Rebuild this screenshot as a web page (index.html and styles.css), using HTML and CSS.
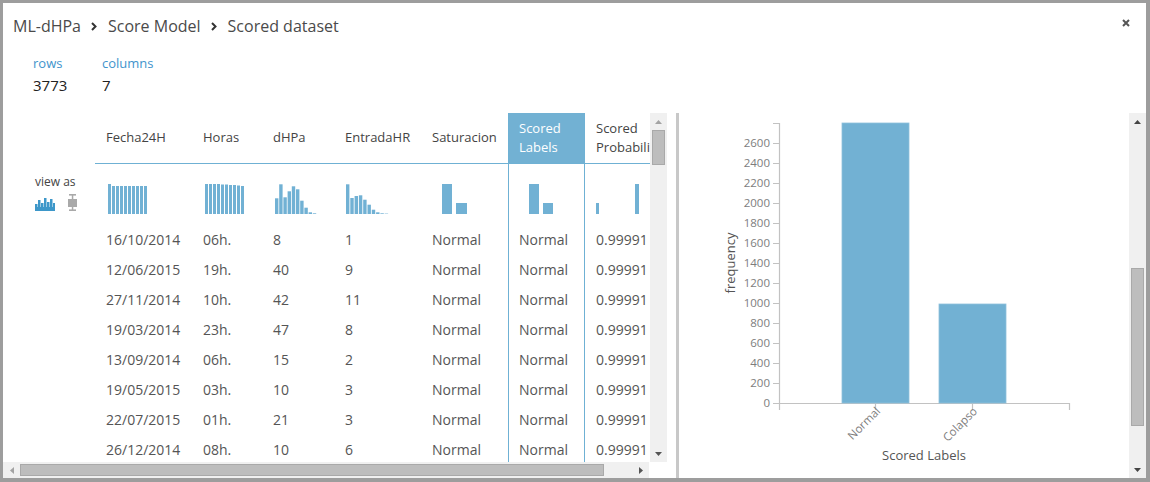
FILE: index.html
```html
<!DOCTYPE html>
<html>
<head>
<meta charset="utf-8">
<link rel="stylesheet" href="styles.css">
</head>
<body>
<div class="modal">
  <div class="head">
    <div class="crumbs">
      <span>ML-dHPa</span>
      <svg class="chev" viewBox="0 0 6 9"><path d="M1 1 L4.5 4.5 L1 8" fill="none" stroke="#333" stroke-width="2"/></svg>
      <span>Score Model</span>
      <svg class="chev" viewBox="0 0 6 9"><path d="M1 1 L4.5 4.5 L1 8" fill="none" stroke="#333" stroke-width="2"/></svg>
      <span>Scored dataset</span>
    </div>
    <button class="close"><svg viewBox="0 0 8 8"><path d="M1 1 L7 7 M7 1 L1 7" stroke="#555" stroke-width="2"/></svg></button>
  </div>
  <div class="stats">
    <div class="stat"><div class="lbl">rows</div><div class="val">3773</div></div>
    <div class="stat"><div class="lbl">columns</div><div class="val">7</div></div>
  </div>
  <div class="main">
    <div class="grid-pane">
      <div class="grid-top">
        <div class="viewas">
          <div class="va-text">view as</div>
          <div class="va-icons">
            <svg class="ic-hist" viewBox="0 0 20 14"><path d="M0 14 V7 H2.5 V10 H3 V3 H5.5 V10 H6 V6 H8.5 V10 H9 V1 H11.5 V10 H12 V5 H14.5 V10 H15 V2 H17.5 V10 H18 V6 H20 V14 Z" fill="#3d97c9"/></svg>
            <svg class="ic-box" viewBox="0 0 9 17"><rect x="1" y="0" width="7" height="1.6" fill="#a9a9a9"/><rect x="3.8" y="0" width="1.5" height="17" fill="#a9a9a9"/><rect x="0" y="5" width="9" height="8" fill="#a9a9a9"/><rect x="1" y="15.4" width="7" height="1.6" fill="#a9a9a9"/></svg>
          </div>
        </div>
        <div class="table-wrap">
          <table class="grid">
            <colgroup>
              <col class="c1"><col class="c2"><col class="c3"><col class="c4"><col class="c5"><col class="c6"><col class="c7">
            </colgroup>
            <thead>
              <tr>
                <th>Fecha24H</th>
                <th>Horas</th>
                <th>dHPa</th>
                <th>EntradaHR</th>
                <th>Saturacion</th>
                <th class="sel">Scored Labels</th>
                <th>Scored Probability</th>
              </tr>
            </thead>
            <tbody>
              <tr class="hist-row">
                <td class="hist"><svg viewBox="0 0 97 30" width="97" height="30"><g fill="#71b1d4">
                  <rect x="13" y="0" width="3" height="30"/><rect x="17" y="2" width="3" height="28"/><rect x="21" y="2" width="3" height="28"/><rect x="25" y="2" width="3" height="28"/><rect x="29" y="2" width="3" height="28"/><rect x="33" y="2" width="3" height="28"/><rect x="37" y="2" width="3" height="28"/><rect x="41" y="2" width="3" height="28"/><rect x="45" y="2" width="3" height="28"/><rect x="49" y="2" width="3" height="28"/>
                </g></svg></td>
                <td class="hist"><svg viewBox="0 0 70 30" width="70" height="30"><g fill="#71b1d4">
                  <rect x="13" y="0" width="3" height="30"/><rect x="17" y="0" width="3" height="30"/><rect x="21" y="0" width="3" height="30"/><rect x="25" y="0" width="3" height="30"/><rect x="29" y="0.5" width="3" height="29.5"/><rect x="33" y="0.5" width="3" height="29.5"/><rect x="37" y="1" width="3" height="29"/><rect x="41" y="1" width="3" height="29"/><rect x="45" y="1.5" width="3" height="28.5"/><rect x="49" y="2" width="3" height="28"/>
                </g></svg></td>
                <td class="hist"><svg viewBox="0 0 72 30" width="72" height="30"><g fill="#71b1d4">
                  <rect x="13" y="14.3" width="3.4" height="15.7"/><rect x="17.2" y="0.3" width="3.4" height="29.7"/><rect x="21.4" y="13.3" width="3.4" height="16.7"/><rect x="25.6" y="7.3" width="3.4" height="22.7"/><rect x="29.8" y="2.3" width="3.4" height="27.7"/><rect x="34" y="5.3" width="3.4" height="24.7"/><rect x="38.2" y="16.7" width="3.4" height="13.3"/><rect x="42.4" y="23.7" width="3.4" height="6.3"/><rect x="46.6" y="28.3" width="3.4" height="1.7"/><rect x="50.8" y="29.3" width="3.4" height="0.7"/>
                </g></svg></td>
                <td class="hist"><svg viewBox="0 0 87 30" width="87" height="30"><g fill="#71b1d4">
                  <rect x="12" y="0.3" width="3.4" height="29.7"/><rect x="16.3" y="14" width="3.4" height="16"/><rect x="20.6" y="12" width="3.4" height="18"/><rect x="24.9" y="11.3" width="3.4" height="18.7"/><rect x="29.2" y="15.7" width="3.4" height="14.3"/><rect x="33.5" y="20.7" width="3.4" height="9.3"/><rect x="37.8" y="25.7" width="3.4" height="4.3"/><rect x="42.1" y="28.3" width="3.4" height="1.7"/><rect x="46.4" y="29.3" width="3.4" height="0.7"/><rect x="50.7" y="29.6" width="3.4" height="0.4"/>
                </g></svg></td>
                <td class="hist"><svg viewBox="0 0 87 30" width="87" height="30"><g fill="#71b1d4">
                  <rect x="21" y="0" width="10" height="30"/><rect x="35" y="19" width="11" height="11"/>
                </g></svg></td>
                <td class="hist sel"><svg viewBox="0 0 77 30" width="77" height="30"><g fill="#71b1d4">
                  <rect x="21" y="0" width="10" height="30"/><rect x="35" y="19" width="10" height="11"/>
                </g></svg></td>
                <td class="hist"><svg viewBox="0 0 90 30" width="90" height="30"><g fill="#71b1d4">
                  <rect x="11" y="19" width="3" height="11"/><rect x="50" y="0" width="4" height="30"/>
                </g></svg></td>
              </tr>
              <tr><td>16/10/2014</td><td>06h.</td><td>8</td><td>1</td><td>Normal</td><td class="sel">Normal</td><td>0.99991</td></tr>
              <tr><td>12/06/2015</td><td>19h.</td><td>40</td><td>9</td><td>Normal</td><td class="sel">Normal</td><td>0.99991</td></tr>
              <tr><td>27/11/2014</td><td>10h.</td><td>42</td><td>11</td><td>Normal</td><td class="sel">Normal</td><td>0.99991</td></tr>
              <tr><td>19/03/2014</td><td>23h.</td><td>47</td><td>8</td><td>Normal</td><td class="sel">Normal</td><td>0.99991</td></tr>
              <tr><td>13/09/2014</td><td>06h.</td><td>15</td><td>2</td><td>Normal</td><td class="sel">Normal</td><td>0.99991</td></tr>
              <tr><td>19/05/2015</td><td>03h.</td><td>10</td><td>3</td><td>Normal</td><td class="sel">Normal</td><td>0.99991</td></tr>
              <tr><td>22/07/2015</td><td>01h.</td><td>21</td><td>3</td><td>Normal</td><td class="sel">Normal</td><td>0.99991</td></tr>
              <tr><td>26/12/2014</td><td>08h.</td><td>10</td><td>6</td><td>Normal</td><td class="sel">Normal</td><td>0.99991</td></tr>
            </tbody>
          </table>
        </div>
        <div class="vscroll">
          <div class="sbtn"><svg viewBox="0 0 7 4" width="7" height="4"><path d="M0 4 L3.5 0 L7 4 Z" fill="#a3a3a3"/></svg></div>
          <div class="thumb-v t1"></div>
          <div class="spacer"></div>
          <div class="sbtn"><svg viewBox="0 0 7 4" width="7" height="4"><path d="M0 0 L3.5 4 L7 0 Z" fill="#555"/></svg></div>
        </div>
      </div>
      <div class="hscroll">
        <div class="hbtn"><svg viewBox="0 0 4 7" width="4" height="7"><path d="M4 0 L0 3.5 L4 7 Z" fill="#a3a3a3"/></svg></div>
        <div class="thumb-h"></div>
        <div class="spacer"></div>
        <div class="hbtn"><svg viewBox="0 0 4 7" width="4" height="7"><path d="M0 0 L4 3.5 L0 7 Z" fill="#555"/></svg></div>
      </div>
    </div>
    <div class="sep"></div>
    <div class="chart-pane">
      <svg class="chart" viewBox="0 0 450 365" width="450" height="365">
        <g stroke="#c2c2c2" stroke-width="1.2" fill="none">
          <path d="M100.5 10 V290.5 H390.5"/>
          <path d="M94 10.5 H100 M94 30.5 H100 M94 50.5 H100 M94 70.5 H100 M94 90.5 H100 M94 110.5 H100 M94 130.5 H100 M94 150.5 H100 M94 170.5 H100 M94 190.5 H100 M94 210.5 H100 M94 230.5 H100 M94 250.5 H100 M94 270.5 H100 M94 290.5 H100"/>
          <path d="M100.5 290 V297 M196.5 290 V297 M293.5 290 V297 M390.5 290 V297"/>
        </g>
        <g class="ticks" text-anchor="end">
          <text x="91" y="34">2600</text>
          <text x="91" y="54">2400</text>
          <text x="91" y="74">2200</text>
          <text x="91" y="94">2000</text>
          <text x="91" y="114">1800</text>
          <text x="91" y="134">1600</text>
          <text x="91" y="154">1400</text>
          <text x="91" y="174">1200</text>
          <text x="91" y="194">1000</text>
          <text x="91" y="214">800</text>
          <text x="91" y="234">600</text>
          <text x="91" y="254">400</text>
          <text x="91" y="274">200</text>
          <text x="91" y="294">0</text>
        </g>
        <rect x="163" y="10" width="67" height="280" fill="#72b1d3" stroke="#8fc1dd" stroke-width="0.8"/>
        <rect x="260" y="191" width="67" height="99" fill="#72b1d3" stroke="#8fc1dd" stroke-width="0.8"/>
        <g class="ticks" text-anchor="end">
          <text transform="translate(202 299) rotate(-45)">Normal</text>
          <text transform="translate(299 299) rotate(-45)">Colapso</text>
        </g>
        <text class="axt" x="245" y="347" text-anchor="middle">Scored Labels</text>
        <text class="axt" transform="translate(56 150) rotate(-90)" text-anchor="middle">frequency</text>
      </svg>
      <div class="vscroll v2">
        <div class="sbtn"><svg viewBox="0 0 7 4" width="7" height="4"><path d="M0 4 L3.5 0 L7 4 Z" fill="#444"/></svg></div>
        <div class="thumb-v t2"></div>
        <div class="spacer"></div>
        <div class="sbtn"><svg viewBox="0 0 7 4" width="7" height="4"><path d="M0 0 L3.5 4 L7 0 Z" fill="#444"/></svg></div>
      </div>
    </div>
  </div>
</div>
</body>
</html>
```

FILE: styles.css
```css
* { box-sizing: border-box; }
html, body { margin: 0; height: 100%; }
body {
  background: #9d9d9d;
  padding: 3px 4px 4px 3px;
  font-family: "Open Sans", "Segoe UI", sans-serif;
  overflow: hidden;
}
.modal {
  width: 1143px;
  height: 475px;
  background: #fff;
  display: flex;
  flex-direction: column;
}
.head {
  height: 46px;
  flex: none;
  display: flex;
  align-items: center;
  justify-content: space-between;
  padding: 0 16px 0 10px;
}
.crumbs {
  display: flex;
  align-items: center;
  font-size: 16px;
  color: #4a4a4a;
}
.chev { width: 6px; height: 9px; margin: 1px 11px 0 10px; }
.close {
  width: 8px; height: 8px;
  border: 0; background: none; padding: 0;
  align-self: flex-start;
  margin-top: 16px;
}
.close svg { display: block; width: 8px; height: 8px; }
.stats {
  display: flex;
  flex: none;
  height: 64px;
  padding: 5px 0 0 30px;
}
.stat { width: 69px; }
.lbl { font-size: 13px; line-height: 18px; color: #3f94cc; }
.val { font-size: 15px; line-height: 20px; color: #222; margin-top: 3px; }
.main {
  display: flex;
  height: 365px;
  flex: none;
}
.grid-pane {
  width: 665px;
  display: flex;
  flex-direction: column;
}
.grid-top {
  display: flex;
  height: 349px;
}
.viewas {
  width: 92px;
  flex: none;
  padding: 60px 0 0 32px;
}
.va-text { font-size: 12px; line-height: 18px; color: #444; }
.va-icons {
  display: flex;
  align-items: flex-end;
  gap: 13px;
  margin-top: 3px;
}
.ic-hist { width: 20px; height: 14px; display: block; }
.ic-box { width: 9px; height: 17px; display: block; }
.table-wrap {
  width: 555px;
  flex: none;
  overflow: hidden;
}
.grid {
  border-collapse: separate;
  border-spacing: 0;
  table-layout: fixed;
  width: 580px;
}
.c1 { width: 97px; }
.c2 { width: 70px; }
.c3 { width: 72px; }
.c4 { width: 87px; }
.c5 { width: 87px; }
.c6 { width: 77px; }
.c7 { width: 90px; }
.grid th {
  height: 51px;
  padding: 0 0 1px 11px;
  font-weight: normal;
  font-size: 13px;
  line-height: 19px;
  color: #444;
  text-align: left;
  vertical-align: middle;
  border-bottom: 1px solid #6fb1d4;
}
.grid th.sel { background: #72b1d3; color: #fff; }
.grid td {
  height: 30px;
  padding: 0 0 0 11px;
  font-size: 14px;
  line-height: 30px;
  color: #555;
  white-space: nowrap;
  overflow: hidden;
}
.grid td.hist {
  height: 61px;
  padding: 0;
  vertical-align: top;
}
.grid td.hist svg { display: block; margin-top: 20px; }
.sel { box-shadow: inset 1px 0 #6fb1d4, inset -1px 0 #6fb1d4; }
.vscroll {
  width: 17px;
  flex: none;
  background: #f0f0f0;
  display: flex;
  flex-direction: column;
  align-items: center;
}
.sbtn {
  height: 17px;
  width: 17px;
  flex: none;
  display: flex;
  align-items: center;
  justify-content: center;
}
.sbtn svg, .hbtn svg { display: block; }
.spacer { flex: 1; }
.thumb-v {
  width: 13px;
  background: #bdbdbd;
  border: 1px solid #a9a9a9;
  flex: none;
}
.t1 { height: 35px; }
.t2 { height: 158px; margin-top: 138px; }
.hscroll {
  width: 646px;
  height: 16px;
  background: #f0f0f0;
  display: flex;
  align-items: center;
}
.hbtn {
  width: 17px;
  height: 16px;
  flex: none;
  display: flex;
  align-items: center;
  justify-content: center;
}
.thumb-h {
  width: 584px;
  height: 12px;
  background: #bdbdbd;
  border: 1px solid #a9a9a9;
  flex: none;
}
.sep {
  width: 3px;
  margin-left: 8px;
  background: #c8c8c8;
  flex: none;
}
.chart-pane {
  display: flex;
  width: 467px;
  flex: none;
}
.chart { display: block; flex: none; }
.ticks { font-size: 11.5px; fill: #7d7d7d; }
.axt { font-size: 13px; fill: #555; }
```
